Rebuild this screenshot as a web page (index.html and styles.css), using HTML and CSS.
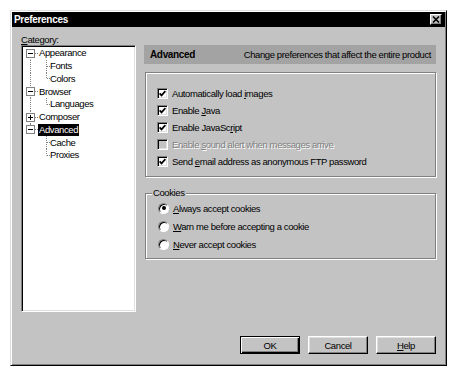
FILE: index.html
```html
<!DOCTYPE html>
<html lang="en">
<head>
    <meta charset="UTF-8">
    <title>Preferences</title>
    <link rel="stylesheet" href="styles.css">
</head>
<body>
    <div class="window">
        <div class="titlebar">
            <span>Preferences</span>
            <span class="close">
                <svg width="8" height="7" viewBox="0 0 8 7"><path d="M1 0.5l6 6M7 0.5l-6 6" stroke="#000" stroke-width="1.6"/></svg>
            </span>
        </div>

        <div class="content">
            <div class="cat-label"><u>C</u>ategory:</div>

            <div class="main">
                <div class="tree">
                    <div class="row"><span class="lead first"><svg class="exp" width="9" height="9"><rect x=".5" y=".5" width="8" height="8" fill="#fff" stroke="#808080"/><path d="M2 4.5h5" stroke="#000"/></svg></span><span class="text">Appearance</span></div>
                    <div class="row"><span class="lead pass"></span><span class="branch mid"></span><span class="text">Fonts</span></div>
                    <div class="row"><span class="lead pass"></span><span class="branch end"></span><span class="text">Colors</span></div>
                    <div class="row"><span class="lead mid"><svg class="exp" width="9" height="9"><rect x=".5" y=".5" width="8" height="8" fill="#fff" stroke="#808080"/><path d="M2 4.5h5" stroke="#000"/></svg></span><span class="text">Browser</span></div>
                    <div class="row"><span class="lead pass"></span><span class="branch end"></span><span class="text">Languages</span></div>
                    <div class="row"><span class="lead mid"><svg class="exp" width="9" height="9"><rect x=".5" y=".5" width="8" height="8" fill="#fff" stroke="#808080"/><path d="M2 4.5h5M4.5 2v5" stroke="#000"/></svg></span><span class="text">Composer</span></div>
                    <div class="row"><span class="lead last"><svg class="exp" width="9" height="9"><rect x=".5" y=".5" width="8" height="8" fill="#fff" stroke="#808080"/><path d="M2 4.5h5" stroke="#000"/></svg></span><span class="text selected">Advanced</span></div>
                    <div class="row"><span class="lead"></span><span class="branch mid"></span><span class="text">Cache</span></div>
                    <div class="row"><span class="lead"></span><span class="branch end"></span><span class="text">Proxies</span></div>
                </div>

                <div class="panel">
                    <div class="panel-head">
                        <b>Advanced</b>
                        <span>Change preferences that affect the entire product</span>
                    </div>

                    <div class="group options">
                        <div class="opt"><span class="check"><svg width="7" height="7" viewBox="0 0 7 7"><path d="M0.6 3.4L2.5 5.4L6.4 1.2" fill="none" stroke="#000" stroke-width="1.7"/></svg></span><span>Automatically load <u>i</u>mages</span></div>
                        <div class="opt"><span class="check"><svg width="7" height="7" viewBox="0 0 7 7"><path d="M0.6 3.4L2.5 5.4L6.4 1.2" fill="none" stroke="#000" stroke-width="1.7"/></svg></span><span>Enable <u>J</u>ava</span></div>
                        <div class="opt"><span class="check"><svg width="7" height="7" viewBox="0 0 7 7"><path d="M0.6 3.4L2.5 5.4L6.4 1.2" fill="none" stroke="#000" stroke-width="1.7"/></svg></span><span>Enable JavaSc<u>r</u>ipt</span></div>
                        <div class="opt disabled"><span class="check"></span><span>Enable <u>s</u>ound alert when messages arrive</span></div>
                        <div class="opt"><span class="check"><svg width="7" height="7" viewBox="0 0 7 7"><path d="M0.6 3.4L2.5 5.4L6.4 1.2" fill="none" stroke="#000" stroke-width="1.7"/></svg></span><span>Send <u>e</u>mail address as anonymous FTP password</span></div>
                    </div>

                    <div class="group cookies">
                        <div class="group-title">Cookies</div>
                        <div class="opt radio-row"><span class="radio on"></span><span><u>A</u>lways accept cookies</span></div>
                        <div class="opt radio-row"><span class="radio"></span><span><u>W</u>arn me before accepting a cookie</span></div>
                        <div class="opt radio-row"><span class="radio"></span><span><u>N</u>ever accept cookies</span></div>
                    </div>
                </div>
            </div>

            <div class="buttons">
                <button class="default">OK</button>
                <button>Cancel</button>
                <button><u>H</u>elp</button>
            </div>
        </div>
    </div>
</body>
</html>
```

FILE: styles.css
```css
* {
    margin: 0;
    padding: 0;
    box-sizing: border-box;
}

body {
    font-family: "Liberation Sans", Arial, sans-serif;
    font-size: 9.5px;
    letter-spacing: -0.4px;
    background-color: #fff;
    color: #000;
}

.window {
    width: 437px;
    height: 356px;
    margin: 10px 0 0 10px;
    padding: 1px;
    background-color: #c3c3c3;
    border: 1px solid;
    border-color: #dfdfdf #000 #000 #dfdfdf;
    box-shadow: inset 1px 1px 0 #fff, inset -1px -1px 0 #808080;
    display: flex;
    flex-direction: column;
}

.titlebar {
    height: 15px;
    background-color: #000;
    color: #fff;
    font-weight: bold;
    font-size: 10px;
    letter-spacing: -0.3px;
    display: flex;
    align-items: center;
    justify-content: space-between;
    padding: 0 3px 0 2px;
}

.close {
    width: 12px;
    height: 11px;
    background-color: #c3c3c3;
    border: 1px solid;
    border-color: #fff #000 #000 #fff;
    box-shadow: inset -1px -1px 0 #808080;
    display: grid;
    place-items: center;
}

.content {
    flex: 1;
    padding: 7px 9px 10px;
    display: flex;
    flex-direction: column;
}

.cat-label {
    height: 11px;
    line-height: 11px;
}

.main {
    display: flex;
    gap: 8px;
    height: 267px;
}

/* tree */
.tree {
    width: 115px;
    padding: 1px;
    background-color: #fff;
    border: 1px solid;
    border-color: #808080 #fff #fff #808080;
    box-shadow: inset 1px 1px 0 #000, inset -1px -1px 0 #dfdfdf;
}

.row {
    height: 12.75px;
    display: flex;
    align-items: center;
}

.lead {
    width: 16px;
    height: 100%;
    flex-shrink: 0;
    display: flex;
    align-items: center;
    background-repeat: no-repeat;
}

.lead .exp {
    margin-left: 3px;
}

.lead.first {
    background-image:
        repeating-linear-gradient(#808080 0 1px, transparent 1px 2px),
        repeating-linear-gradient(to right, #808080 0 1px, transparent 1px 2px);
    background-position: 7px 100%, 8px 50%;
    background-size: 1px 50%, 7px 1px;
}

.lead.mid {
    background-image:
        repeating-linear-gradient(#808080 0 1px, transparent 1px 2px),
        repeating-linear-gradient(to right, #808080 0 1px, transparent 1px 2px);
    background-position: 7px 0, 8px 50%;
    background-size: 1px 100%, 7px 1px;
}

.lead.last {
    background-image:
        repeating-linear-gradient(#808080 0 1px, transparent 1px 2px),
        repeating-linear-gradient(to right, #808080 0 1px, transparent 1px 2px);
    background-position: 7px 0, 8px 50%;
    background-size: 1px 50%, 7px 1px;
}

.lead.pass {
    background-image: repeating-linear-gradient(#808080 0 1px, transparent 1px 2px);
    background-position: 7px 0;
    background-size: 1px 100%;
}

.branch {
    width: 11px;
    height: 100%;
    flex-shrink: 0;
    background-image:
        repeating-linear-gradient(#808080 0 1px, transparent 1px 2px),
        repeating-linear-gradient(to right, #808080 0 1px, transparent 1px 2px);
    background-repeat: no-repeat;
    background-position: 7px 0, 8px 50%;
    background-size: 1px 100%, 3px 1px;
}

.branch.end {
    background-size: 1px 50%, 3px 1px;
}

.text {
    line-height: 12px;
    padding: 0 1px;
    margin-left: -1px;
    white-space: nowrap;
}

.text.selected {
    background-color: #000;
    color: #fff;
}

/* right side */
.panel {
    width: 292px;
    display: flex;
    flex-direction: column;
}

.panel-head {
    height: 19px;
    background-color: #a3a3a3;
    display: flex;
    align-items: center;
    justify-content: space-between;
    padding: 0 5px 0 6px;
    white-space: nowrap;
}

.panel-head b {
    font-size: 10px;
    letter-spacing: -0.35px;
}

.group {
    margin-left: 1px;
    border: 1px solid #808080;
    box-shadow: inset 1px 1px 0 #fff, 1px 1px 0 #fff;
}

.options {
    height: 105px;
    margin-top: 8px;
    padding: 12px 0 0 11px;
}

.opt {
    height: 17px;
    display: flex;
    align-items: center;
    gap: 4px;
    white-space: nowrap;
}

.check {
    width: 11px;
    height: 11px;
    background-color: #fff;
    border: 1px solid;
    border-color: #808080 #fff #fff #808080;
    box-shadow: inset 1px 1px 0 #000, inset -1px -1px 0 #dfdfdf;
    display: grid;
    place-items: center;
}

.opt.disabled {
    color: #808080;
    text-shadow: 1px 1px 0 #fff;
}

.opt.disabled .check {
    background-color: #c3c3c3;
}

.cookies {
    height: 66px;
    margin-top: 16px;
    padding-left: 12px;
}

.group-title {
    width: fit-content;
    height: 12px;
    line-height: 12px;
    margin: -7px 0 0 -6px;
    padding: 0 1px;
    background-color: #c3c3c3;
}

.radio-row {
    height: 18px;
}

.radio {
    width: 11px;
    height: 11px;
    border-radius: 50%;
    background-color: #fff;
    border: 1px solid;
    border-color: #808080 #fff #fff #808080;
    box-shadow: inset 1px 1px 0 #000;
    display: grid;
    place-items: center;
}

.radio.on::after {
    content: "";
    width: 4px;
    height: 4px;
    border-radius: 50%;
    background-color: #000;
}

/* buttons */
.buttons {
    margin-top: 24px;
    display: flex;
    justify-content: flex-end;
    gap: 8px;
}

button {
    width: 60px;
    height: 18px;
    font-family: inherit;
    font-size: 9.5px;
    letter-spacing: -0.4px;
    color: #000;
    background-color: #c3c3c3;
    border: 1px solid;
    border-color: #fff #000 #000 #fff;
    box-shadow: inset -1px -1px 0 #808080, inset 1px 1px 0 #dfdfdf;
}

button.default {
    border-color: #000;
    box-shadow: inset 1px 1px 0 #fff, inset -1px -1px 0 #000, inset -2px -2px 0 #808080;
}
```
